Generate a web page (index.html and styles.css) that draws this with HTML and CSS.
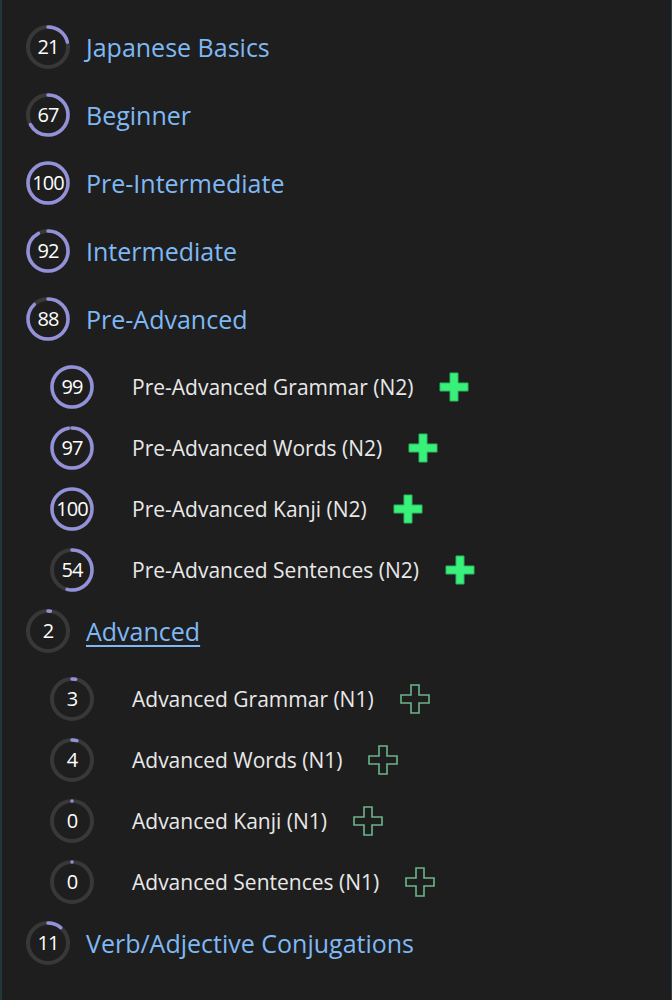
FILE: index.html
```html
<!DOCTYPE html>
<html lang="en">
<head>
  <meta charset="UTF-8">
  <meta name="viewport" content="width=device-width, initial-scale=1.0">
  <title>Course Progress</title>
  <link rel="stylesheet" href="styles.css">
</head>
<body>

  <div class="container">
    <ul class="course-list">

      <li class="course">
        <div class="course-row">
          <span class="ring">
            <svg viewBox="0 0 44 44"><circle class="track" cx="22" cy="22" r="20"/><circle class="bar" cx="22" cy="22" r="20" pathLength="100" stroke-dasharray="21 100"/></svg>
            <span class="ring-num">21</span>
          </span>
          <a class="course-title" href="#">Japanese Basics</a>
        </div>
      </li>

      <li class="course">
        <div class="course-row">
          <span class="ring">
            <svg viewBox="0 0 44 44"><circle class="track" cx="22" cy="22" r="20"/><circle class="bar" cx="22" cy="22" r="20" pathLength="100" stroke-dasharray="67 100"/></svg>
            <span class="ring-num">67</span>
          </span>
          <a class="course-title" href="#">Beginner</a>
        </div>
      </li>

      <li class="course">
        <div class="course-row">
          <span class="ring">
            <svg viewBox="0 0 44 44"><circle class="track" cx="22" cy="22" r="20"/><circle class="bar" cx="22" cy="22" r="20" pathLength="100" stroke-dasharray="100 100"/></svg>
            <span class="ring-num">100</span>
          </span>
          <a class="course-title" href="#">Pre-Intermediate</a>
        </div>
      </li>

      <li class="course">
        <div class="course-row">
          <span class="ring">
            <svg viewBox="0 0 44 44"><circle class="track" cx="22" cy="22" r="20"/><circle class="bar" cx="22" cy="22" r="20" pathLength="100" stroke-dasharray="92 100"/></svg>
            <span class="ring-num">92</span>
          </span>
          <a class="course-title" href="#">Intermediate</a>
        </div>
      </li>

      <li class="course">
        <div class="course-row">
          <span class="ring">
            <svg viewBox="0 0 44 44"><circle class="track" cx="22" cy="22" r="20"/><circle class="bar" cx="22" cy="22" r="20" pathLength="100" stroke-dasharray="88 100"/></svg>
            <span class="ring-num">88</span>
          </span>
          <a class="course-title" href="#">Pre-Advanced</a>
        </div>
        <ul class="deck-list">
          <li class="deck-row">
            <span class="ring">
              <svg viewBox="0 0 44 44"><circle class="track" cx="22" cy="22" r="20"/><circle class="bar" cx="22" cy="22" r="20" pathLength="100" stroke-dasharray="99 100"/></svg>
              <span class="ring-num">99</span>
            </span>
            <span class="deck-title">Pre-Advanced Grammar (N2)</span>
            <svg class="plus added" viewBox="0 0 30 30"><path d="M11 1h8v10h10v8H19v10h-8V19H1v-8h10z"/></svg>
          </li>
          <li class="deck-row">
            <span class="ring">
              <svg viewBox="0 0 44 44"><circle class="track" cx="22" cy="22" r="20"/><circle class="bar" cx="22" cy="22" r="20" pathLength="100" stroke-dasharray="97 100"/></svg>
              <span class="ring-num">97</span>
            </span>
            <span class="deck-title">Pre-Advanced Words (N2)</span>
            <svg class="plus added" viewBox="0 0 30 30"><path d="M11 1h8v10h10v8H19v10h-8V19H1v-8h10z"/></svg>
          </li>
          <li class="deck-row">
            <span class="ring">
              <svg viewBox="0 0 44 44"><circle class="track" cx="22" cy="22" r="20"/><circle class="bar" cx="22" cy="22" r="20" pathLength="100" stroke-dasharray="100 100"/></svg>
              <span class="ring-num">100</span>
            </span>
            <span class="deck-title">Pre-Advanced Kanji (N2)</span>
            <svg class="plus added" viewBox="0 0 30 30"><path d="M11 1h8v10h10v8H19v10h-8V19H1v-8h10z"/></svg>
          </li>
          <li class="deck-row">
            <span class="ring">
              <svg viewBox="0 0 44 44"><circle class="track" cx="22" cy="22" r="20"/><circle class="bar" cx="22" cy="22" r="20" pathLength="100" stroke-dasharray="54 100"/></svg>
              <span class="ring-num">54</span>
            </span>
            <span class="deck-title">Pre-Advanced Sentences (N2)</span>
            <svg class="plus added" viewBox="0 0 30 30"><path d="M11 1h8v10h10v8H19v10h-8V19H1v-8h10z"/></svg>
          </li>
        </ul>
      </li>

      <li class="course">
        <div class="course-row">
          <span class="ring">
            <svg viewBox="0 0 44 44"><circle class="track" cx="22" cy="22" r="20"/><circle class="bar" cx="22" cy="22" r="20" pathLength="100" stroke-dasharray="2 100"/></svg>
            <span class="ring-num">2</span>
          </span>
          <a class="course-title active" href="#">Advanced</a>
        </div>
        <ul class="deck-list">
          <li class="deck-row">
            <span class="ring">
              <svg viewBox="0 0 44 44"><circle class="track" cx="22" cy="22" r="20"/><circle class="bar" cx="22" cy="22" r="20" pathLength="100" stroke-dasharray="3 100"/></svg>
              <span class="ring-num">3</span>
            </span>
            <span class="deck-title">Advanced Grammar (N1)</span>
            <svg class="plus" viewBox="0 0 30 30"><path d="M11 1h8v10h10v8H19v10h-8V19H1v-8h10z"/></svg>
          </li>
          <li class="deck-row">
            <span class="ring">
              <svg viewBox="0 0 44 44"><circle class="track" cx="22" cy="22" r="20"/><circle class="bar" cx="22" cy="22" r="20" pathLength="100" stroke-dasharray="4 100"/></svg>
              <span class="ring-num">4</span>
            </span>
            <span class="deck-title">Advanced Words (N1)</span>
            <svg class="plus" viewBox="0 0 30 30"><path d="M11 1h8v10h10v8H19v10h-8V19H1v-8h10z"/></svg>
          </li>
          <li class="deck-row">
            <span class="ring">
              <svg viewBox="0 0 44 44"><circle class="track" cx="22" cy="22" r="20"/><circle class="bar" cx="22" cy="22" r="20" pathLength="100" stroke-dasharray="0 100"/></svg>
              <span class="ring-num">0</span>
            </span>
            <span class="deck-title">Advanced Kanji (N1)</span>
            <svg class="plus" viewBox="0 0 30 30"><path d="M11 1h8v10h10v8H19v10h-8V19H1v-8h10z"/></svg>
          </li>
          <li class="deck-row">
            <span class="ring">
              <svg viewBox="0 0 44 44"><circle class="track" cx="22" cy="22" r="20"/><circle class="bar" cx="22" cy="22" r="20" pathLength="100" stroke-dasharray="0 100"/></svg>
              <span class="ring-num">0</span>
            </span>
            <span class="deck-title">Advanced Sentences (N1)</span>
            <svg class="plus" viewBox="0 0 30 30"><path d="M11 1h8v10h10v8H19v10h-8V19H1v-8h10z"/></svg>
          </li>
        </ul>
      </li>

      <li class="course">
        <div class="course-row">
          <span class="ring">
            <svg viewBox="0 0 44 44"><circle class="track" cx="22" cy="22" r="20"/><circle class="bar" cx="22" cy="22" r="20" pathLength="100" stroke-dasharray="11 100"/></svg>
            <span class="ring-num">11</span>
          </span>
          <a class="course-title" href="#">Verb/Adjective Conjugations</a>
        </div>
      </li>

    </ul>
  </div>

</body>
</html>
```

FILE: styles.css
```css
body, html {
  margin: 0;
  padding: 0;
  font-family: 'Open Sans', 'Noto Sans', sans-serif;
  background-color: #1e1e1e;
  color: #e6e6e6;
}

.container {
  min-height: 1000px;
  box-sizing: border-box;
  border-left: 2px solid #24363c;
  border-right: 1px solid #2b4047;
  padding: 16px 0 0 24px;
}

ul {
  list-style: none;
  margin: 0;
  padding: 0;
}

.course-row, .deck-row {
  display: flex;
  align-items: center;
  height: 61px;
}

.course-row {
  margin-bottom: 7px;
}

.deck-list {
  padding-left: 24px;
}

.ring {
  position: relative;
  flex: none;
  width: 44px;
  height: 44px;
}

.ring svg {
  display: block;
  width: 44px;
  height: 44px;
  transform: rotate(-90deg);
}

.ring .track {
  fill: none;
  stroke: #383838;
  stroke-width: 4;
}

.ring .bar {
  fill: none;
  stroke: #9391d9;
  stroke-width: 3.5;
  stroke-linecap: round;
}

.ring-num {
  position: absolute;
  inset: 0;
  display: flex;
  align-items: center;
  justify-content: center;
  font-size: 20px;
  color: #fff;
  letter-spacing: -1px;
}

.course-title {
  margin-left: 16px;
  font-size: 25px;
  color: #7fb9f5;
  text-decoration: none;
}

.course-title.active {
  text-decoration: underline;
  text-underline-offset: 4px;
  text-decoration-thickness: 2px;
}

.deck-title {
  margin-left: 38px;
  font-size: 21px;
  color: #e8e8e8;
}

.plus {
  flex: none;
  width: 30px;
  height: 30px;
  margin-left: 26px;
}

.plus path {
  fill: #1e1e1e;
  stroke: #6cb68a;
  stroke-width: 1.6;
}

.plus.added path {
  fill: #38f07a;
  stroke: #2cb862;
  stroke-width: 1;
}
```
